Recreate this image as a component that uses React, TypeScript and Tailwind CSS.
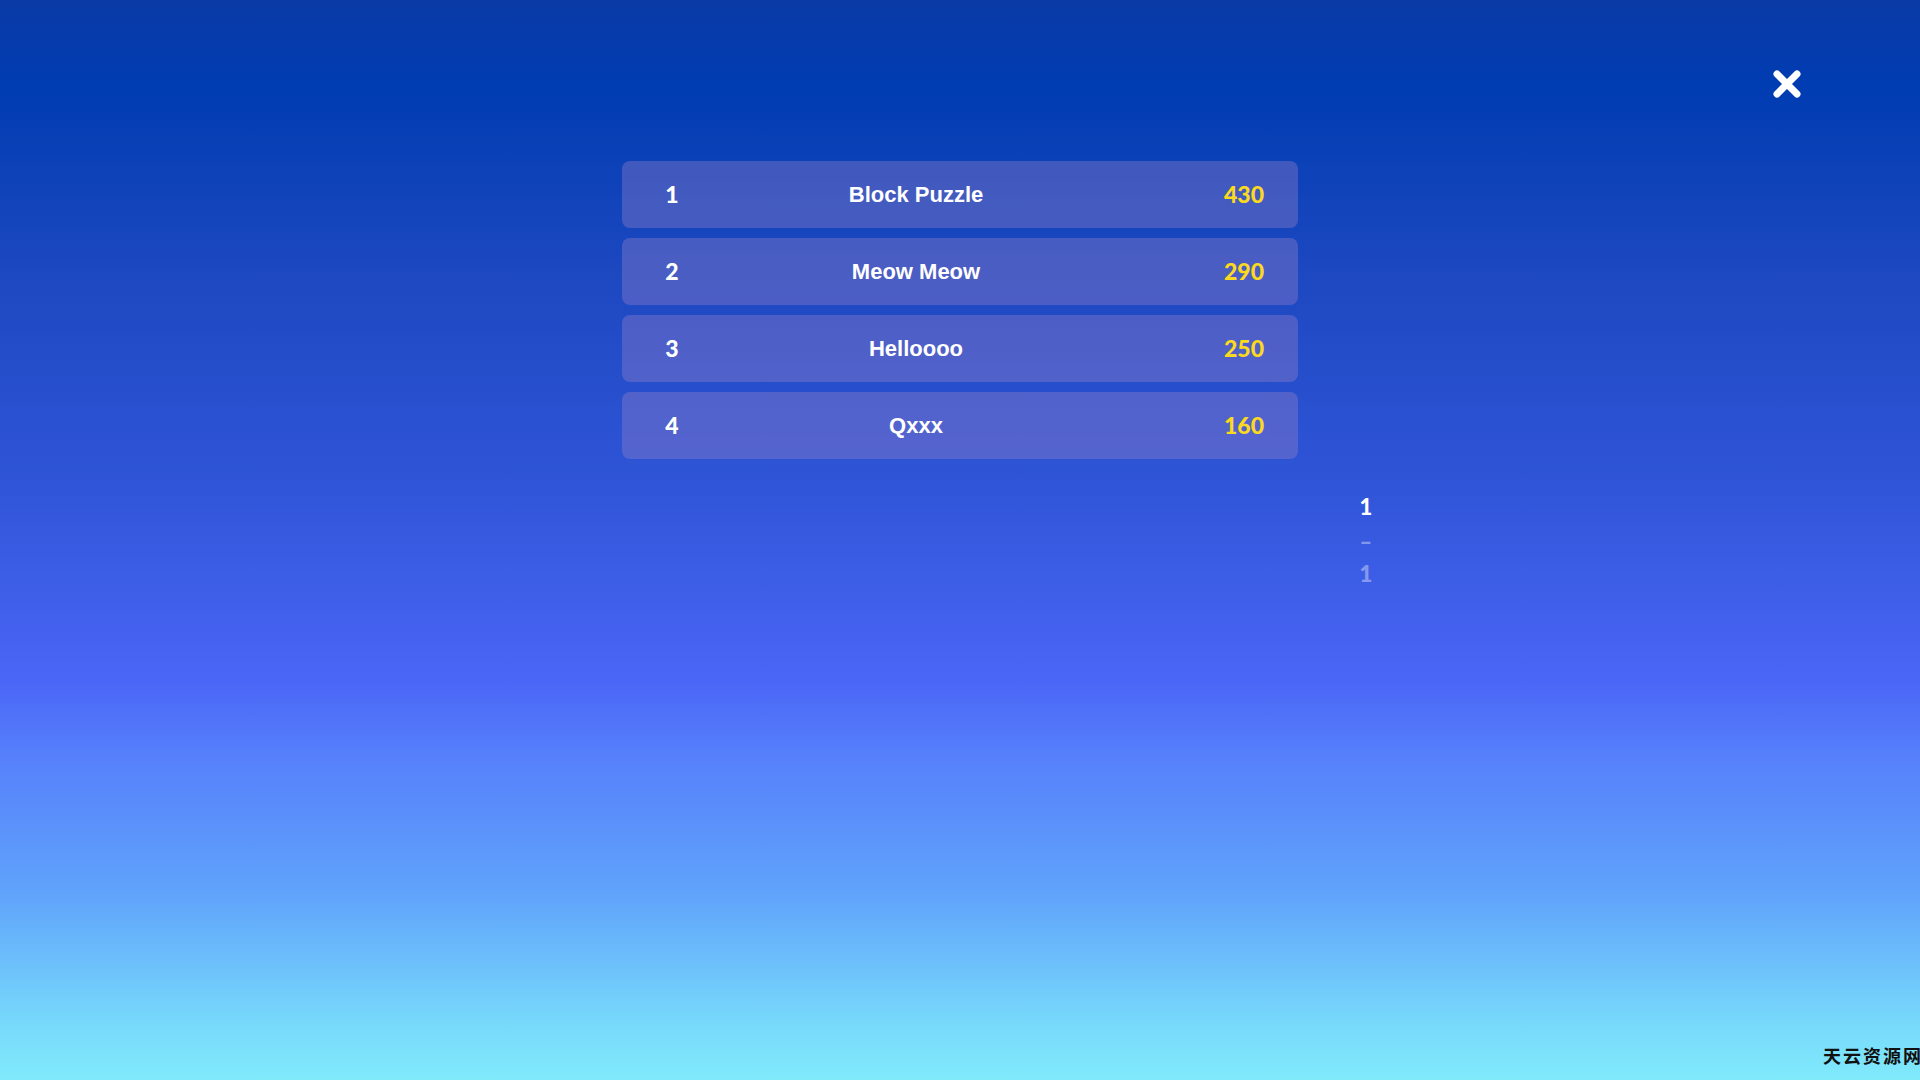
import React from "react";

type Entry = { rank: number; name: string; score: number };

const entries: Entry[] = [
  { rank: 1, name: "Block Puzzle", score: 430 },
  { rank: 2, name: "Meow Meow", score: 290 },
  { rank: 3, name: "Helloooo", score: 250 },
  { rank: 4, name: "Qxxx", score: 160 },
];

function CloseIcon() {
  return (
    <svg width="28" height="28" viewBox="0 0 28 28" fill="none">
      <path d="M4 4 L24 24 M24 4 L4 24" stroke="white" strokeWidth="7" strokeLinecap="round" />
    </svg>
  );
}

function Row({ entry }: { entry: Entry }) {
  return (
    <div className="flex h-[67px] items-center rounded-[8px] bg-[rgba(150,130,200,0.38)] px-[34px]">
      <div className="w-[32px] text-center font-['Lato',sans-serif] text-[23px] font-black text-white">
        {entry.rank}
      </div>
      <div className="flex-1 text-center font-['Liberation_Sans',Arial,sans-serif] text-[22px] font-bold text-white">
        {entry.name}
      </div>
      <div className="w-[120px] text-right font-['Lato',sans-serif] text-[23px] font-black text-[#fbd91f]">
        {entry.score}
      </div>
    </div>
  );
}

export default function App() {
  return (
    <div className="relative h-[1080px] w-[1920px] overflow-hidden bg-[linear-gradient(to_bottom,#0a3aa6_0%,#003cb2_8%,#1c48c0_25%,#3055d8_45%,#4a66f6_63%,#5680fb_70%,#60a4fb_83%,#78dafb_95%,#80eafc_100%)]">
      <button className="absolute right-[119px] top-[70px]">
        <CloseIcon />
      </button>

      <main className="pt-[161px]">
        <div className="mx-auto w-[676px]">
          <div className="flex flex-col gap-[10px]">
            {entries.map((e) => (
              <Row key={e.rank} entry={e} />
            ))}
          </div>

          {/* page indicator */}
          <div className="mr-[-78px] mt-[31px] flex justify-end">
            <div className="flex w-[20px] flex-col items-center font-['Lato',sans-serif] text-[22px] font-black">
              <span className="leading-[33px] text-white">1</span>
              <span className="leading-[38px] text-white/40">–</span>
              <span className="leading-[26px] text-white/40">1</span>
            </div>
          </div>
        </div>
      </main>

      <div className="absolute bottom-[16px] left-[1823px] whitespace-nowrap font-['Noto_Sans_CJK_SC',sans-serif] text-[18px] font-bold leading-none tracking-[2px] text-[#111]">
        天云资源网
      </div>
    </div>
  );
}
